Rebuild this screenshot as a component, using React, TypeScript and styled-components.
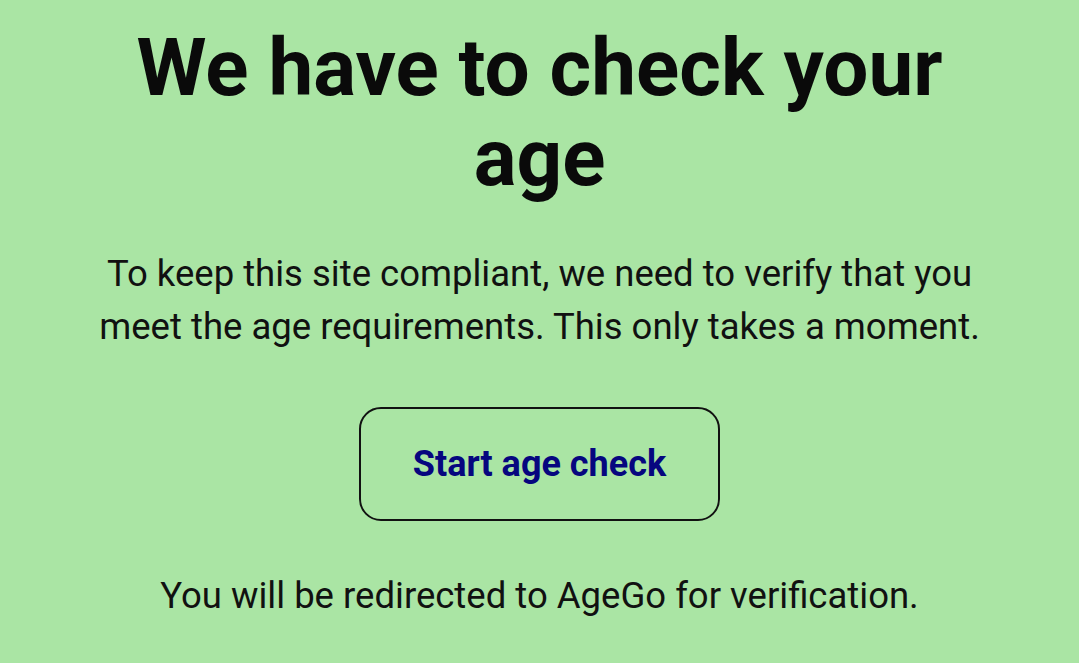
import React from "react";
import styled, { createGlobalStyle } from "styled-components";

const GlobalStyle = createGlobalStyle`
  html, body {
    margin: 0;
    padding: 0;
    background: #aae5a4;
  }
  body {
    font-family: Roboto, "Liberation Sans", Arial, sans-serif;
    color: #111;
  }
`;

const App = () => {
  return (
    <>
      <GlobalStyle />
      <Page>
        <Content>
          <Title>We have to check your age</Title>
          <Lead>
            To keep this site compliant, we need to verify that you meet the
            age requirements. This only takes a moment.
          </Lead>
          <StartButton type="button">Start age check</StartButton>
          <Note>You will be redirected to AgeGo for verification.</Note>
        </Content>
      </Page>
    </>
  );
};

export default App;

const Page = styled.div`
  width: 100%;
  min-height: 663px;
  display: flex;
  justify-content: center;
  background: #aae5a4;
`;

const Content = styled.div`
  width: 910px;
  display: flex;
  flex-direction: column;
  align-items: center;
  text-align: center;
  padding-top: 23px;
`;

const Title = styled.h1`
  margin: 0;
  font-size: 80px;
  font-weight: 700;
  line-height: 90px;
  color: #0a0a0a;
`;

const Lead = styled.p`
  margin: 44px 0 0;
  font-size: 36.5px;
  line-height: 53px;
  color: #111;
`;

const StartButton = styled.button`
  margin-top: 54px;
  width: 361px;
  height: 114px;
  border: 2px solid #111;
  border-radius: 22px;
  background: transparent;
  font-family: Roboto, "Liberation Sans", Arial, sans-serif;
  font-size: 36px;
  font-weight: 700;
  color: #06067f;
  cursor: pointer;
`;

const Note = styled.p`
  margin: 51px 0 0;
  font-size: 36.5px;
  line-height: 48px;
  color: #111;
`;
